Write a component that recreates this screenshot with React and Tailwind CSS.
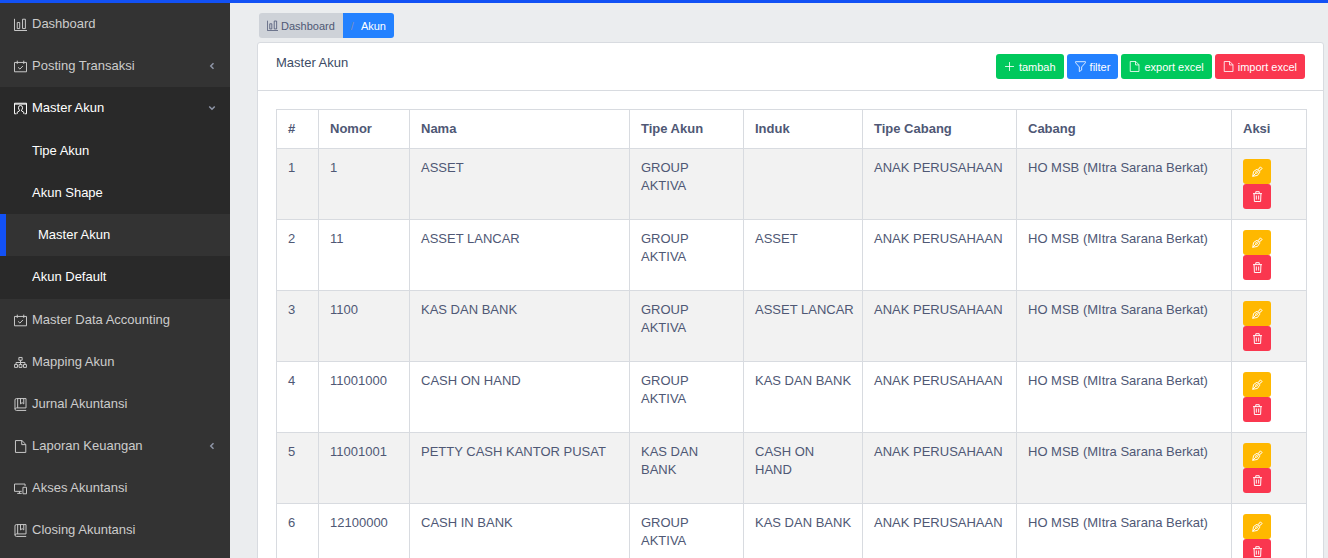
import React from 'react';

const shapes = {
  chart: <path d="M.6 1v14.400h15.400M4 5.500h3v7.500H4zM10.500 1.500h3.500v11.500h-3.500z" />,
  calendar: <path d="M.6 3h14.800v11.500H.6zM4 .8v4M12 .8v4M5 9l2.300 2.200L11 7.300" />,
  contact: <path d="M3 14.500H.6v-13h14.800v13H13M.6 2.600h14.800M5.500 7a2.500 2.700 0 0 1 5 0c0 1.500-.5 2.300-1.200 2.900v1.100l2.700 1.500v2M5.500 7c0 1.500.5 2.300 1.200 2.900v1.100L4 12.500v2" />,
  sitemap: <path d="M6 1.800h4v3.400H6zM8 5.200v5M2.500 10.500V8h11v2.500M.7 10.500h3.600V14H.7zM6.200 10.500h3.600V14H6.200zM11.700 10.500h3.600V14h-3.600z" />,
  book: <path d="M15 15.300H3a1.800 1.800 0 0 1-1.800-1.800V2.500A1.800 1.800 0 0 1 3 .7h11.800v11.500H3M4.500.7v11.500M8 .7v6.600l2-1.600 2 1.600V.7M1.200 13.500c0-.8.800-1.300 1.800-1.300" />,
  file: <path d="M1.800.7h8l4.700 4.700v9.900H1.800zM9.500.7v5h5" />,
  devices: <path d="M9.500 11.500H.6V2.500h13V5M4 14h5.500M6.700 11.500V14M11 6.500h4.400v8H11z" />,
  plus: <path d="M8 1.500v13M1.500 8h13" />,
  filter: <path d="M.8 1h14.400v1.500L9.700 8.700v4.500l-3.400 2.200V8.700L.8 2.500z" />,
  pen: <path strokeWidth="1.400" d="M1 15l1.300-7 4.700-3.200 4.200 4.200L8 13.700zM1 15l4.600-4.600M8 9.200a1.300 1.300 0 1 1-2.600 0 1.300 1.300 0 0 1 2.600 0zM8.300 4.800l1.500-.3 2.400-3.300 2.600 2.600-3.300 2.400-.3 1.500z" />,
  trash: <path strokeWidth="1.400" d="M1.500 3.800h13M5.500 3.800V1h5v2.800M3 3.800l.5 11.500h9l.5-11.500M6.300 6.500v6M9.700 6.500v6" />,
  left: <path d="M11 2.500L5.500 8l5.500 5.500" strokeWidth="3" />,
  down: <path d="M2.500 5L8 10.500 13.500 5" strokeWidth="3" />,
};

function Icon({ name, className }) {
  return (
    <svg viewBox="0 0 16 16" fill="none" stroke="currentColor" strokeWidth="1.2" aria-hidden="true" className={`shrink-0 ${className}`}>
      {shapes[name]}
    </svg>
  );
}

function NavItem({ icon, label, arrow, open }) {
  return (
    <a href="#" className={`flex h-[42px] items-center gap-[5px] px-3.5 ${open ? 'text-white' : 'text-[#cccccc]'}`}>
      <Icon name={icon} className="size-[13px]" />
      <span className="flex-1">{label}</span>
      {arrow && <Icon name={arrow} className="size-2 text-[#8f96a8]" />}
    </a>
  );
}

const subItems = ['Tipe Akun', 'Akun Shape', 'Master Akun', 'Akun Default'];

function Sidebar() {
  return (
    <nav className="w-[230px] shrink-0 overflow-y-auto bg-[#333333] [scrollbar-width:none]">
      <ul>
        <li><NavItem icon="chart" label="Dashboard" /></li>
        <li><NavItem icon="calendar" label="Posting Transaksi" arrow="left" /></li>
        <li className="bg-[#292929]">
          <NavItem icon="contact" label="Master Akun" arrow="down" open />
          <ul className="py-px text-white">
            {subItems.map((s) => (
              <li key={s}>
                <a
                  href="#"
                  className={`flex h-[42px] items-center pl-8 ${s === 'Master Akun' ? 'border-l-[6px] border-[#1251f5] bg-[#333333]' : ''}`}
                >
                  {s}
                </a>
              </li>
            ))}
          </ul>
        </li>
        <li><NavItem icon="calendar" label="Master Data Accounting" /></li>
        <li><NavItem icon="sitemap" label="Mapping Akun" /></li>
        <li><NavItem icon="book" label="Jurnal Akuntansi" /></li>
        <li><NavItem icon="file" label="Laporan Keuangan" arrow="left" /></li>
        <li><NavItem icon="devices" label="Akses Akuntansi" /></li>
        <li><NavItem icon="book" label="Closing Akuntansi" /></li>
      </ul>
    </nav>
  );
}

const actions = [
  ['plus', 'tambah', 'bg-[#00c95c]'],
  ['filter', 'filter', 'bg-[#2381ff]'],
  ['file', 'export excel', 'bg-[#00c95c]'],
  ['file', 'import excel', 'bg-[#fa374f]'],
];

const columns = [
  ['#', 'w-[42px]'],
  ['Nomor', 'w-[91px]'],
  ['Nama', ''],
  ['Tipe Akun', 'w-[114px]'],
  ['Induk', 'w-[119px]'],
  ['Tipe Cabang', 'w-[154px]'],
  ['Cabang', 'w-[215px]'],
  ['Aksi', 'w-[75px]'],
];

const rows = [
  ['1', 'ASSET', 'GROUP AKTIVA', ''],
  ['11', 'ASSET LANCAR', 'GROUP AKTIVA', 'ASSET'],
  ['1100', 'KAS DAN BANK', 'GROUP AKTIVA', 'ASSET LANCAR'],
  ['11001000', 'CASH ON HAND', 'GROUP AKTIVA', 'KAS DAN BANK'],
  ['11001001', 'PETTY CASH KANTOR PUSAT', 'KAS DAN BANK', 'CASH ON HAND'],
  ['12100000', 'CASH IN BANK', 'GROUP AKTIVA', 'KAS DAN BANK'],
];

const cell = 'border border-[#d8dbe0] pl-[11px] pr-2 py-2.5 align-top';

export default function App() {
  return (
    <div className="flex h-screen flex-col overflow-hidden border-t-[3px] border-[#1251f5] bg-[#ebedef] font-['Liberation_Sans',Arial,sans-serif] text-[13px] leading-[18px] text-[#4f5875]">
      <div className="flex min-h-0 flex-1">
        <Sidebar />
        <main className="min-w-0 flex-1 overflow-y-auto pl-[27px] pr-1 pt-2.5 [scrollbar-width:none]">
          <nav aria-label="Breadcrumb" className="ml-0.5 flex h-[25px] w-fit overflow-hidden rounded-[3px] text-[11px]">
            <a href="#" className="flex items-center gap-[3px] bg-[#ced2d8] px-2">
              <Icon name="chart" className="size-[11px]" />
              Dashboard
            </a>
            <a href="#" className="flex items-center gap-[7px] bg-[#2381ff] px-2 text-white">
              <span className="text-[#7c8fc0]">/</span>
              Akun
            </a>
          </nav>
          <section className="mt-1 rounded-[3px] border border-[#d8dbe0] bg-white">
            <header className="flex items-start justify-between border-b border-[#d8dbe0] px-[18px] py-[11px]">
              <h1 className="text-[#3c4b64]">Master Akun</h1>
              <div className="flex gap-[3px]">
                {actions.map(([icon, label, color]) => (
                  <button key={label} type="button" className={`flex h-[25px] items-center gap-1 rounded-[3px] px-2 text-[11px] text-white ${color}`}>
                    <Icon name={icon} className="size-[11px]" />
                    {label}
                  </button>
                ))}
              </div>
            </header>
            <div className="pb-4 pl-[18px] pr-4 pt-[18px]">
              <table className="w-full table-fixed border-collapse">
                <thead>
                  <tr>
                    {columns.map(([name, width]) => (
                      <th key={name} scope="col" className={`text-left font-bold ${cell} ${width}`}>{name}</th>
                    ))}
                  </tr>
                </thead>
                <tbody>
                  {rows.map(([nomor, nama, tipe, induk], i) => (
                    <tr key={nomor} className="odd:bg-[#f2f2f2]">
                      <td className={cell}>{i + 1}</td>
                      <td className={cell}>{nomor}</td>
                      <td className={cell}>{nama}</td>
                      <td className={cell}>{tipe}</td>
                      <td className={cell}>{induk}</td>
                      <td className={cell}>ANAK PERUSAHAAN</td>
                      <td className={cell}>HO MSB (MItra Sarana Berkat)</td>
                      <td className={cell}>
                        <button type="button" aria-label={`Edit ${nama}`} className="flex h-[25px] w-7 items-center justify-center rounded-[3px] bg-[#ffb800] text-white">
                          <Icon name="pen" className="size-[11px]" />
                        </button>
                        <button type="button" aria-label={`Hapus ${nama}`} className="flex h-[25px] w-7 items-center justify-center rounded-[3px] bg-[#fa374f] text-white">
                          <Icon name="trash" className="size-[11px]" />
                        </button>
                      </td>
                    </tr>
                  ))}
                </tbody>
              </table>
            </div>
          </section>
        </main>
      </div>
    </div>
  );
}
